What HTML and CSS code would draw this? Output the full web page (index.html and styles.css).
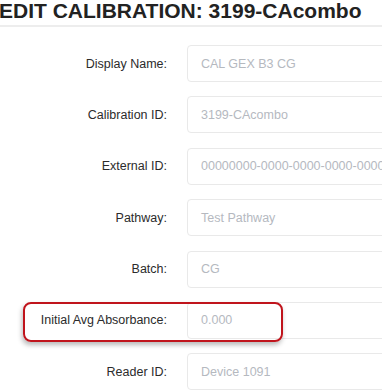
FILE: index.html
```html
<!DOCTYPE html>
<html>
<head>
<meta charset="utf-8">
<link rel="stylesheet" href="styles.css">
</head>
<body>
<div class="page">
  <div class="header">
    <h1 class="title">EDIT CALIBRATION: 3199-CAcombo</h1>
  </div>
  <form class="form">
    <div class="row">
      <label class="label">Display Name:</label>
      <div class="field">CAL GEX B3 CG</div>
    </div>
    <div class="row">
      <label class="label">Calibration ID:</label>
      <div class="field">3199-CAcombo</div>
    </div>
    <div class="row">
      <label class="label">External ID:</label>
      <div class="field">00000000-0000-0000-0000-000000000000</div>
    </div>
    <div class="row">
      <label class="label">Pathway:</label>
      <div class="field">Test Pathway</div>
    </div>
    <div class="row">
      <label class="label">Batch:</label>
      <div class="field">CG</div>
    </div>
    <div class="row">
      <label class="label">Initial Avg Absorbance:</label>
      <div class="field">0.000</div>
      <div class="highlight"></div>
    </div>
    <div class="row">
      <label class="label">Reader ID:</label>
      <div class="field">Device 1091</div>
    </div>
  </form>
</div>
</body>
</html>
```
FILE: styles.css
```css
html, body {
  margin: 0;
  padding: 0;
  background: #ffffff;
  overflow: hidden;
}
.page {
  font-family: "Liberation Sans", Arial, sans-serif;
  width: 382px;
  overflow: hidden;
}
.header {
  height: 25px;
  border-bottom: 2px solid #ededed;
}
.title {
  margin: 0 0 0 -1px;
  font-size: 21px;
  line-height: 22px;
  font-weight: bold;
  color: #222222;
  white-space: nowrap;
}
.form {
  display: flex;
  flex-direction: column;
  gap: 14.4px;
  padding-top: 18px;
}
.row {
  position: relative;
  display: flex;
  align-items: center;
  gap: 20px;
  height: 37px;
}
.label {
  width: 167px;
  flex: none;
  text-align: right;
  font-size: 12.5px;
  color: #2b2b2b;
  white-space: nowrap;
}
.field {
  flex: none;
  box-sizing: border-box;
  width: 260px;
  height: 37px;
  padding: 0 13px;
  border: 1px solid #e9e9e9;
  border-radius: 4px;
  background: #ffffff;
  display: flex;
  align-items: center;
  font-size: 12.5px;
  color: #b5b9bf;
  white-space: nowrap;
  overflow: hidden;
}
.highlight {
  position: absolute;
  left: 23px;
  top: 0;
  width: 260px;
  height: 40px;
  box-sizing: border-box;
  border: 2px solid #c0141c;
  border-radius: 8px;
  box-shadow: -1px 3px 5px rgba(0, 0, 0, 0.28);
  pointer-events: none;
}
```
